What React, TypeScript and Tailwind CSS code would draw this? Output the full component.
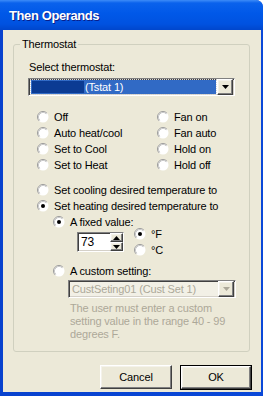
import React from "react";

const font = "font-['Tahoma','Liberation_Sans',sans-serif]";

function Radio({ checked = false }: { checked?: boolean }) {
  return (
    <svg width="12" height="12" viewBox="0 0 12 12" className="shrink-0">
      <circle cx="6" cy="6" r="5.5" fill="#ffffff" />
      <path d="M2.11 9.89 A5.5 5.5 0 0 1 9.89 2.11" fill="none" stroke="#9a9a9a" strokeWidth="1" />
      <path d="M2.82 9.18 A4.5 4.5 0 0 1 9.18 2.82" fill="none" stroke="#c8c8c8" strokeWidth="1" />
      {checked && <circle cx="6" cy="6" r="2" fill="#000000" />}
    </svg>
  );
}

function RadioItem({ label, checked, gray }: { label: string; checked?: boolean; gray?: boolean }) {
  return (
    <div className="h-[16px] flex items-center gap-[5px]">
      <Radio checked={checked} />
      <span className={gray ? "text-[#aca899]" : "text-black"}>{label}</span>
    </div>
  );
}

function Arrow({ color = "#000" }: { color?: string }) {
  return (
    <svg width="7" height="4" viewBox="0 0 7 4">
      <path d="M0 0 H7 L3.5 4 Z" fill={color} />
    </svg>
  );
}

const sunken =
  "border border-t-[#808080] border-l-[#808080] border-b-white border-r-white shadow-[inset_1px_1px_0_#404040,inset_-1px_-1px_0_#d4d0c8]";
const raised =
  "border border-t-white border-l-white border-b-[#404040] border-r-[#404040] shadow-[inset_-1px_-1px_0_#808080,inset_1px_1px_0_#f4f2ea]";

export default function App() {
  return (
    <div className={`w-[263px] h-[396px] bg-white ${font} text-[11px] leading-[13px] tracking-[-0.15px]`}>
      <div className="w-full h-full flex flex-col bg-[#0842ce] rounded-tr-[7px] overflow-hidden">
        <div className="h-[30px] shrink-0 flex items-center pl-[9px] bg-[linear-gradient(to_bottom,#3d8cf8_0%,#0a62ec_10%,#0058e8_45%,#0052e0_80%,#0046cc_100%)]">
          <span className="text-white font-bold text-[13px] tracking-[-0.4px] font-['Trebuchet_MS','Liberation_Sans',sans-serif] [text-shadow:1px_1px_0_#0a1e8a]">
            Then Operands
          </span>
        </div>
        <div className="flex-1 flex pl-[3px] pr-[2px] pb-[4px] bg-[linear-gradient(to_right,#0842ce,#0a48d8)]">
          <div className="flex-1 bg-[#ece9d8] flex flex-col pt-[8px]">
            <fieldset className="ml-[10px] mr-[11px] h-[314px] border border-[#d0d0bf] rounded-[3px] px-0">
              <legend className="ml-[6px] px-[2px] leading-[13px]">Thermostat</legend>
              <div className="flex flex-col pl-[14px]">
                <div className="mt-[10px] pl-[1px]">Select thermostat:</div>
                <div className={`mt-[4px] w-[207px] h-[18px] bg-white flex items-center ${sunken}`}>
                  <div className="flex-1 h-[14px] ml-[2px] bg-[#316ac5] outline-1 outline-dotted outline-[#d8d8d8] flex items-center">
                    <div className="w-[52px] h-[12px] bg-[#0b3b93] ml-[1px]" />
                    <span className="text-white ml-[1px]">(Tstat 1)</span>
                  </div>
                  <div className={`w-[16px] h-[16px] mr-[1px] ml-[1px] bg-[#ece9d8] flex items-center justify-center ${raised}`}>
                    <Arrow />
                  </div>
                </div>
                <div className="mt-[13px] pl-[9px] grid grid-cols-[120px_1fr]">
                  <RadioItem label="Off" />
                  <RadioItem label="Fan on" />
                  <RadioItem label="Auto heat/cool" />
                  <RadioItem label="Fan auto" />
                  <RadioItem label="Set to Cool" />
                  <RadioItem label="Hold on" />
                  <RadioItem label="Set to Heat" />
                  <RadioItem label="Hold off" />
                </div>
                <div className="mt-[9px] pl-[9px] flex flex-col">
                  <RadioItem label="Set cooling desired temperature to" />
                  <RadioItem label="Set heating desired temperature to" checked />
                  <div className="pl-[16px] flex flex-col">
                    <RadioItem label="A fixed value:" checked />
                    <div className="-mt-[4px] h-[32px] flex items-center pl-[24px]">
                      <div className={`w-[47px] h-[20px] bg-white flex items-stretch ${sunken}`}>
                        <span className="flex-1 pl-[3px] flex items-center text-[12px]">73</span>
                        <div className="w-[13px] flex flex-col">
                          <div className={`flex-1 bg-[#ece9d8] flex items-center justify-center ${raised}`}>
                            <svg width="7" height="4" viewBox="0 0 7 4"><path d="M0 4 H7 L3.5 0 Z" fill="#000" /></svg>
                          </div>
                          <div className={`flex-1 bg-[#ece9d8] flex items-center justify-center ${raised}`}>
                            <Arrow />
                          </div>
                        </div>
                      </div>
                      <div className="ml-[10px] flex flex-col">
                        <RadioItem label="°F" checked />
                        <RadioItem label="°C" />
                      </div>
                    </div>
                    <div className="mt-[5px]">
                      <RadioItem label="A custom setting:" />
                    </div>
                    <div className={`mt-[1px] ml-[15px] w-[168px] h-[18px] bg-[#f2f0e6] flex items-center ${sunken}`}>
                      <span className="flex-1 pl-[3px] text-[#aca899]">CustSeting01 (Cust Set 1)</span>
                      <div className={`w-[16px] h-[16px] mr-[1px] bg-[#ece9d8] flex items-center justify-center ${raised}`}>
                        <Arrow color="#aca899" />
                      </div>
                    </div>
                    <div className="mt-[4px] ml-[17px] text-[#aca899] leading-[13px]">
                      The user must enter a custom
                      <br />
                      setting value in the range 40 - 99
                      <br />
                      degrees F.
                    </div>
                  </div>
                </div>
              </div>
            </fieldset>
            <div className="mt-[13px] flex justify-end gap-[8px] pr-[9px]">
              <button className={`w-[72px] h-[24px] bg-[#ece9d8] ${raised}`}>Cancel</button>
              <div className="border border-black">
                <button className={`w-[70px] h-[23px] bg-[#ece9d8] block ${raised}`}>OK</button>
              </div>
            </div>
          </div>
        </div>
      </div>
    </div>
  );
}
